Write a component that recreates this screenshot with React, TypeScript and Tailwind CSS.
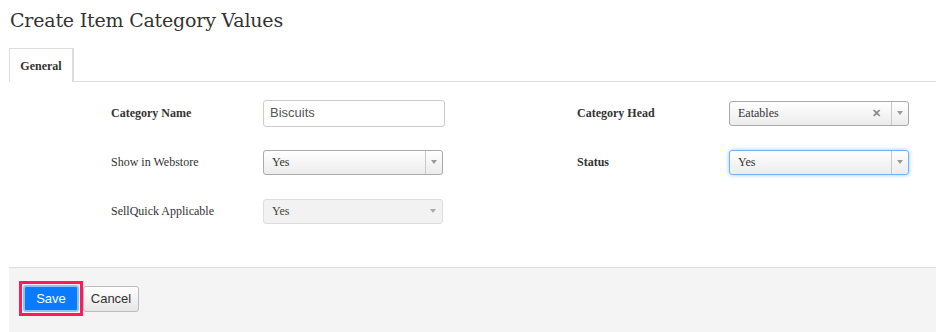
import React from 'react';

const serif = "font-[family-name:'Liberation_Serif','Times_New_Roman',serif]";
const sans = "font-[family-name:'Liberation_Sans',Arial,sans-serif]";

function Caret() {
  return (
    <span className="flex w-[17px] items-center justify-center self-stretch border-l border-[#c8c8c8]">
      <span className="block h-0 w-0 border-x-[3px] border-t-[4px] border-x-transparent border-t-[#999]" />
    </span>
  );
}

function Select({ value, clear, focus }: { value: string; clear?: boolean; focus?: boolean }) {
  return (
    <div
      className={`flex h-[25px] w-[180px] items-center rounded-[3px] border bg-gradient-to-b from-white to-[#ececec] ${
        focus ? 'border-[#6fb3f5] shadow-[0_0_4px_rgba(82,168,236,0.6)]' : 'border-[#aaa]'
      }`}
    >
      <span className={`${serif} flex-1 pl-[8px] text-[12px] text-[#333]`}>{value}</span>
      {clear && <span className={`${sans} mr-[10px] text-[11px] font-bold text-[#888]`}>✕</span>}
      <Caret />
    </div>
  );
}

function Field({ label, bold, children }: { label: string; bold?: boolean; children: React.ReactNode }) {
  return (
    <div className="flex h-[26px] items-center">
      <span className={`${serif} w-[152px] text-[12px] text-[#333] ${bold ? 'font-bold' : ''}`}>{label}</span>
      {children}
    </div>
  );
}

export default function App() {
  return (
    <div className="h-[332px] w-[936px] overflow-hidden bg-white">
      <h1 className="px-[10px] pt-[8px] font-[family-name:'DejaVu_Serif',serif] text-[19px] leading-[24px] tracking-[-0.2px] text-[#333]">
        Create Item Category Values
      </h1>

      <div className="mt-[16px] flex pl-[9px]">
        <div className={`${serif} -mb-px h-[34px] w-[65px] border border-b-0 border-r-[2px] border-[#ddd] bg-white pt-[8px] text-center text-[12px] font-bold text-[#333]`}>
          General
        </div>
      </div>
      <div className="ml-[74px] border-t border-[#ddd]" />

      <div className="flex pl-[111px] pt-[18px]">
        <div className="flex w-[466px] flex-col gap-[23px]">
          <Field label="Category Name" bold>
            <div className={`${sans} flex h-[27px] w-[182px] items-center rounded-[3px] border border-[#ccc] bg-white pl-[6px] text-[13px] text-[#555]`}>
              Biscuits
            </div>
          </Field>
          <Field label="Show in Webstore">
            <Select value="Yes" />
          </Field>
          <Field label="SellQuick Applicable">
            <div className="flex h-[25px] w-[180px] items-center rounded-[3px] border border-[#ddd] bg-[#f2f2f2]">
              <span className={`${serif} flex-1 pl-[8px] text-[12px] text-[#444]`}>Yes</span>
              <span className="mr-[6px] block h-0 w-0 border-x-[3px] border-t-[4px] border-x-transparent border-t-[#aaa]" />
            </div>
          </Field>
        </div>
        <div className="flex flex-col gap-[23px]">
          <Field label="Category Head" bold>
            <Select value="Eatables" clear />
          </Field>
          <Field label="Status" bold>
            <Select value="Yes" focus />
          </Field>
        </div>
      </div>

      <div className="ml-[9px] mt-[43px] h-[70px] border-t border-[#ddd] bg-[#f4f4f4] pl-[10px] pt-[13px]">
        <div className="flex items-center">
          <div className="border-[3px] border-[#ff1a5a] p-px">
            <button className={`${sans} block h-[27px] w-[56px] rounded-[3px] border-2 border-[#8ec2ff] bg-[#0a7aff] text-[13px] text-white`}>
              Save
            </button>
          </div>
          <button className={`${sans} h-[26px] w-[56px] rounded-[3px] border border-[#bbb] bg-gradient-to-b from-white to-[#e6e6e6] text-[13px] text-[#333]`}>
            Cancel
          </button>
        </div>
      </div>
    </div>
  );
}
